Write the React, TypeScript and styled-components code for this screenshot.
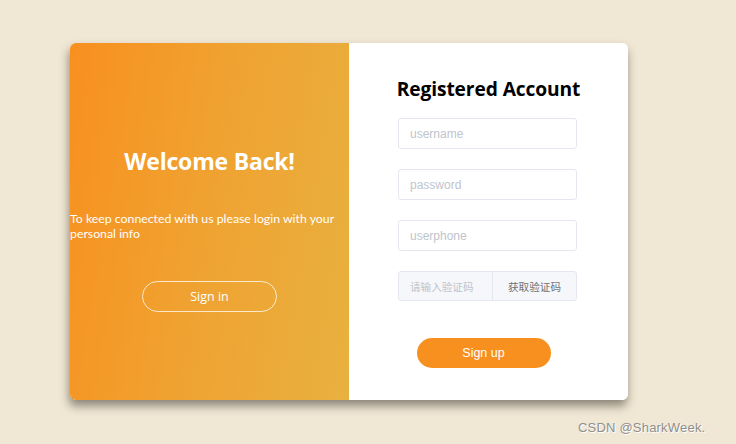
import React from "react";
import styled, { createGlobalStyle } from "styled-components";

const Global = createGlobalStyle`
  html, body { margin: 0; padding: 0; }
  body {
    background: #f0e7d4;
    width: 736px;
    height: 444px;
    overflow: hidden;
    font-family: "Open Sans", "Noto Sans", sans-serif;
  }
`;

const Page = styled.div`
  position: relative;
  width: 736px;
  height: 444px;
  padding: 43px 0 0 70px;
  box-sizing: border-box;
`;

const Card = styled.div`
  display: flex;
  width: 558px;
  height: 357px;
  border-radius: 6px;
  overflow: hidden;
  background: #fff;
  box-shadow: -1px 6px 10px rgba(60, 55, 45, 0.55);
`;

const LeftPanel = styled.div`
  width: 279px;
  flex-shrink: 0;
  display: flex;
  flex-direction: column;
  align-items: center;
  background: linear-gradient(100deg, #f8901f 0%, #f0a130 45%, #e8b13f 100%);
  color: #fff;
`;

const WelcomeTitle = styled.h1`
  margin: 102px 0 0;
  font-family: "Open Sans", "Noto Sans", sans-serif;
  font-size: 23px;
  font-weight: 700;
  line-height: 32px;
  letter-spacing: -0.2px;
`;

const Info = styled.p`
  align-self: stretch;
  margin: 34px 0 0;
  font-family: Lato, "Open Sans", sans-serif;
  font-size: 12.3px;
  line-height: 15px;
  text-align: left;
`;

const GhostButton = styled.button`
  margin: 40px 0 0;
  width: 135px;
  height: 31px;
  border: 1px solid rgba(255, 255, 255, 0.75);
  border-radius: 16px;
  background: transparent;
  color: #fff;
  font-family: "Open Sans", "Noto Sans", sans-serif;
  font-size: 12.5px;
  padding: 0;
`;

const RightPanel = styled.div`
  flex: 1;
  display: flex;
  flex-direction: column;
  align-items: center;
  background: #fff;
`;

const FormTitle = styled.h2`
  margin: 33px 0 0;
  font-family: "Open Sans", "Noto Sans", sans-serif;
  font-size: 19.2px;
  font-weight: 700;
  line-height: 26px;
  color: #000;
  letter-spacing: -0.1px;
`;

const Form = styled.div`
  margin-top: 16px;
  display: flex;
  flex-direction: column;
  gap: 20px;
  width: 179px;
  margin-left: -2px;
`;

const Field = styled.div`
  height: 31px;
  box-sizing: border-box;
  border: 1px solid #e4e7ed;
  border-radius: 3px;
  padding-left: 11px;
  display: flex;
  align-items: center;
  font-family: "Liberation Sans", Arial, sans-serif;
  font-size: 12px;
  color: #c0c4cc;
  background: #fff;
`;

const CodeRow = styled.div`
  height: 30px;
  display: flex;
  box-sizing: border-box;
  border: 1px solid #e4e7ed;
  border-radius: 3px;
  background: #f5f7fa;
  font-family: "Noto Sans CJK SC", "Liberation Sans", sans-serif;
  font-size: 10.6px;
`;

const CodeInput = styled.div`
  width: 94px;
  box-sizing: border-box;
  padding-left: 11px;
  display: flex;
  align-items: center;
  color: #c0c4cc;
  border-right: 1px solid #e4e7ed;
`;

const CodeButton = styled.div`
  flex: 1;
  display: flex;
  align-items: center;
  justify-content: center;
  color: #707275;
`;

const SignUp = styled.button`
  margin: 37px 0 0 -10px;
  width: 134px;
  height: 30px;
  border: none;
  border-radius: 15px;
  background: #f8901f;
  color: #fff;
  font-family: "Liberation Sans", Arial, sans-serif;
  font-size: 12.5px;
  padding: 0;
`;

const Watermark = styled.div`
  position: absolute;
  left: 578px;
  top: 420px;
  font-family: "Liberation Sans", Arial, sans-serif;
  font-size: 13px;
  color: #8f8f8f;
  text-shadow: 1px 1px 0 #fff;
  letter-spacing: 0.2px;
`;

export default function App() {
  return (
    <>
      <Global />
      <Page>
        <Card>
          <LeftPanel>
            <WelcomeTitle>Welcome Back!</WelcomeTitle>
            <Info>To keep connected with us please login with your personal info</Info>
            <GhostButton>Sign in</GhostButton>
          </LeftPanel>
          <RightPanel>
            <FormTitle>Registered Account</FormTitle>
            <Form>
              <Field>username</Field>
              <Field>password</Field>
              <Field>userphone</Field>
              <CodeRow>
                <CodeInput>请输入验证码</CodeInput>
                <CodeButton>获取验证码</CodeButton>
              </CodeRow>
            </Form>
            <SignUp>Sign up</SignUp>
          </RightPanel>
        </Card>
        <Watermark>CSDN @SharkWeek.</Watermark>
      </Page>
    </>
  );
}
